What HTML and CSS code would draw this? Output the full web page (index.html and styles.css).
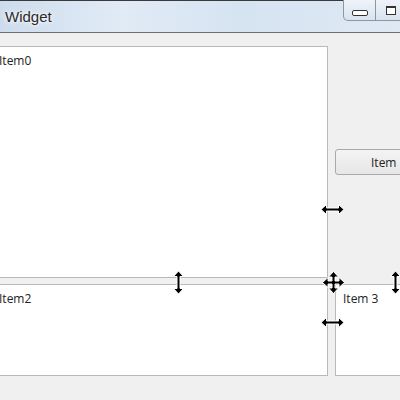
FILE: index.html
```html
<!DOCTYPE html>
<html lang="en">
<head>
  <meta charset="UTF-8">
  <title>Widget</title>
  <link rel="stylesheet" href="styles.css">
</head>
<body>
  <div class="window">
    <div class="titlebar">
      <span class="title">Widget</span>
      <div class="winbtns">
        <div class="winbtn min"><span class="glyph-min"></span></div>
        <div class="winbtn max"><span class="glyph-max"></span></div>
      </div>
    </div>

    <div class="content">
      <div class="panel item0">Item0</div>
      <div class="side">
        <button class="btn">Item</button>
      </div>
      <div class="panel item2">Item2</div>
      <div class="panel item3">Item 3</div>
    </div>

    <!-- splitter cursors -->
    <svg class="cursor h1" width="25" height="11" viewBox="0 0 25 11">
      <polygon points="1,5.5 6.5,0.5 6.5,4 18.5,4 18.5,0.5 24,5.5 18.5,10.5 18.5,7 6.5,7 6.5,10.5" fill="#000" stroke="#fff" stroke-width="1"/>
    </svg>
    <svg class="cursor v1" width="11" height="25" viewBox="0 0 11 25">
      <polygon points="5.5,1 10.5,6.5 7,6.5 7,18.5 10.5,18.5 5.5,24 0.5,18.5 4,18.5 4,6.5 0.5,6.5" fill="#000" stroke="#fff" stroke-width="1"/>
    </svg>
    <svg class="cursor mv" width="23" height="23" viewBox="0 0 23 23">
      <polygon points="11.5,0.5 16.5,6 13,6 13,10 17,10 17,6.5 22.5,11.5 17,16.5 17,13 13,13 13,17 16.5,17 11.5,22.5 6.5,17 10,17 10,13 6,13 6,16.5 0.5,11.5 6,6.5 6,10 10,10 10,6 6.5,6" fill="#000" stroke="#fff" stroke-width="1"/>
    </svg>
    <svg class="cursor h2" width="25" height="11" viewBox="0 0 25 11">
      <polygon points="1,5.5 6.5,0.5 6.5,4 18.5,4 18.5,0.5 24,5.5 18.5,10.5 18.5,7 6.5,7 6.5,10.5" fill="#000" stroke="#fff" stroke-width="1"/>
    </svg>
    <svg class="cursor v2" width="11" height="25" viewBox="0 0 11 25">
      <polygon points="5.5,1 10.5,6.5 7,6.5 7,18.5 10.5,18.5 5.5,24 0.5,18.5 4,18.5 4,6.5 0.5,6.5" fill="#000" stroke="#fff" stroke-width="1"/>
    </svg>
  </div>
</body>
</html>
```

FILE: styles.css
```css
body {
  margin: 0;
  background: #f0f0f0;
  font-family: "Open Sans", "DejaVu Sans", sans-serif;
  overflow: hidden;
}
.window {
  position: relative;
  width: 400px;
  height: 400px;
  overflow: hidden;
}
.titlebar {
  display: flex;
  align-items: flex-start;
  height: 33px;
  border-top: 1px solid #3a3a3a;
  border-bottom: 1px solid #6e6e6e;
  background: linear-gradient(to right, #cddcec 0%, #e1ebf6 30%, #d6e3f1 60%, #dfe9f4 100%);
  box-sizing: border-box;
}
.title {
  font-family: "Liberation Sans", Arial, sans-serif;
  font-size: 15px;
  color: #2a2a2a;
  padding: 7px 0 0 5px;
  text-shadow: 0 0 6px #fff, 0 0 3px #fff;
}
.winbtns {
  display: flex;
  margin-left: auto;
  margin-right: -12px;
  margin-top: -1px;
}
.winbtn {
  height: 21px;
  border: 1px solid #8a96a4;
  border-top: none;
  background: linear-gradient(#eef3f9, #d9e3ee);
  box-sizing: border-box;
  display: flex;
  align-items: center;
  justify-content: center;
}
.winbtn.min {
  width: 33px;
  border-bottom-left-radius: 5px;
}
.winbtn.max {
  width: 36px;
  border-left: none;
  justify-content: flex-start;
  padding-left: 10px;
}
.glyph-min {
  display: block;
  width: 14px;
  height: 4px;
  margin-top: 5px;
  border: 1px solid #333;
  border-radius: 2px;
  background: #fff;
}
.glyph-max {
  display: block;
  width: 8px;
  height: 6px;
  border: 1px solid #333;
  border-top-width: 2px;
  background: #fff;
}
.content {
  display: grid;
  grid-template-columns: 334px 80px;
  grid-template-rows: 232px 92px;
  column-gap: 7px;
  row-gap: 6px;
  margin: 13px 0 0 -6px;
}
.panel {
  background: #fff;
  border: 1px solid #b9b9b9;
  font-size: 12px;
  color: #222;
  padding: 5px 7px;
}
.item0,
.item2 {
  padding-left: 4px;
}
.item3 {
  border-right: none;
}
.side {
  padding-top: 103px;
}
.btn {
  display: block;
  width: 100px;
  height: 26px;
  border: 1px solid #a9a9a9;
  border-radius: 3px;
  background: linear-gradient(#f4f4f4, #e6e6e6);
  font-family: "Open Sans", "DejaVu Sans", sans-serif;
  font-size: 12px;
  color: #222;
  text-align: left;
  padding: 0 0 0 35px;
}
.cursor {
  position: absolute;
}
.h1 { left: 320px; top: 204px; }
.v1 { left: 173px; top: 270px; }
.mv { left: 322px; top: 271px; }
.h2 { left: 320px; top: 317px; }
.v2 { left: 390px; top: 270px; }
```
